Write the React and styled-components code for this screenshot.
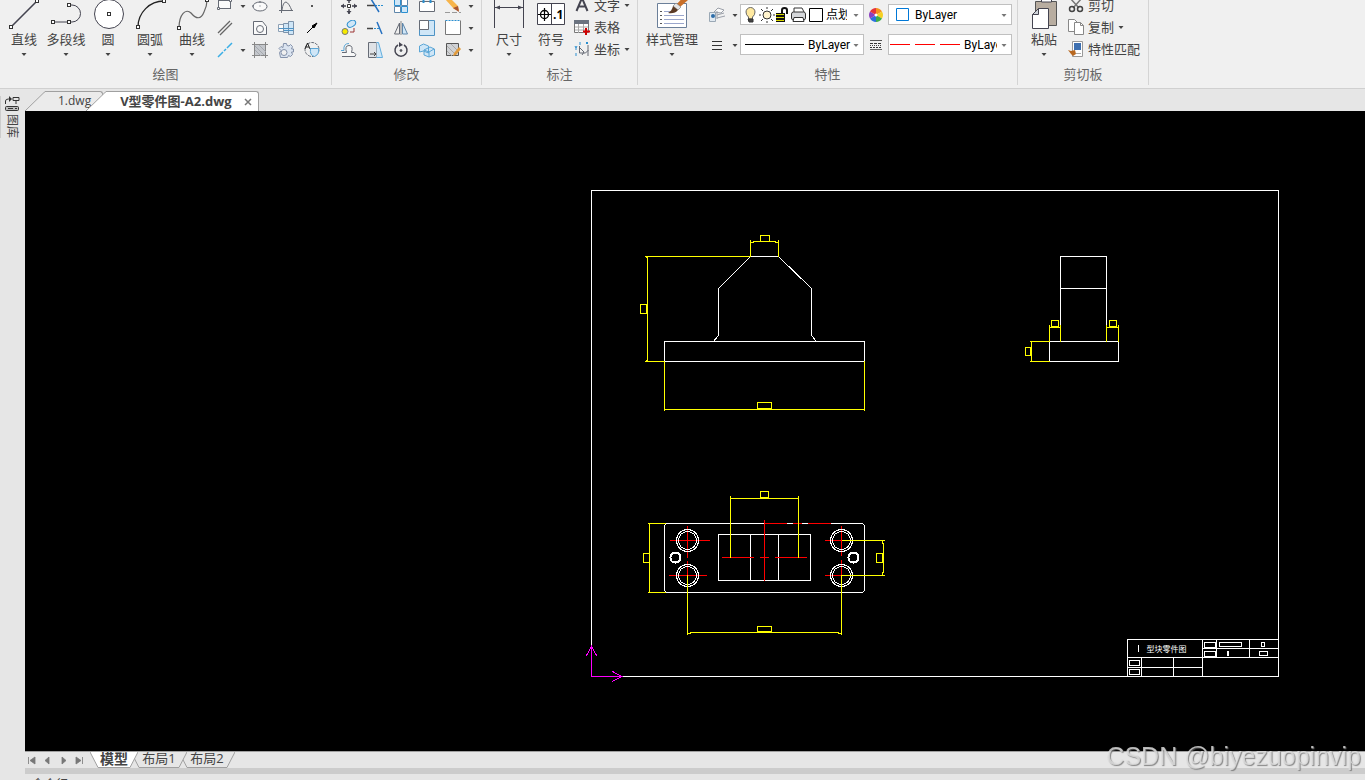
import React from 'react';
import styled, { createGlobalStyle } from 'styled-components';

const GlobalStyle = createGlobalStyle`
  html,
  body {
    margin: 0;
    background: #e6e6e6;
  }
  *,
  *::before,
  *::after {
    box-sizing: border-box;
  }
  button,
  select {
    margin: 0;
    padding: 0;
    border: 0;
    background: none;
    color: inherit;
    font: inherit;
  }
`;

const Page = styled.div`
  height: 100vh;
  display: flex;
  flex-direction: column;
  overflow: hidden;
  font-family: 'Open Sans', 'Noto Sans CJK SC', sans-serif;
  font-size: 13px;
  color: #444444;
`;

/* ---------- ribbon ---------- */

const Ribbon = styled.header`
  flex: none;
  display: flex;
  height: 89px;
  overflow: hidden;
  background: #f0f0f0;
  border-bottom: 1px solid #d0d0d0;
`;

const Group = styled.section`
  flex: none;
  display: flex;
  flex-direction: column;
  height: 85px;
  border-right: 1px solid #d4d4d4;
`;

const Tools = styled.div`
  display: flex;
  height: 66px;
  margin-top: -5px;
  padding: 0 ${p => p.$right}px 0 ${p => p.$left}px;
`;

const GroupTitle = styled.h2`
  margin: 3px 0 0;
  line-height: 20px;
  font-size: 13px;
  font-weight: 400;
  text-align: center;
  color: #666666;
`;

const BigTool = styled.button`
  display: flex;
  flex-direction: column;
  align-items: center;
  width: ${p => p.$width || 42}px;
  line-height: 18px;
  white-space: nowrap;
  svg {
    flex: none;
  }
  svg:last-child {
    margin-top: 2px;
  }
`;

const IconGrid = styled.div`
  display: grid;
  grid-template-columns: ${p => p.$columns};
  grid-auto-rows: 22px;
`;

const IconButton = styled.button`
  display: flex;
  align-items: center;
  justify-content: center;
`;

const ToolList = styled.div`
  display: flex;
  flex-direction: column;
  margin: -1px 0 0 ${p => p.$left}px;
`;

const TextTool = styled.button`
  display: flex;
  align-items: center;
  gap: 4px;
  height: 22px;
  line-height: 16px;
  white-space: nowrap;
`;

const Properties = styled.div`
  display: grid;
  grid-template-columns: 26px 10px 124px 24px 124px;
  grid-auto-rows: 21px;
  row-gap: 9px;
  margin-top: 9px;
`;

const Combo = styled.label`
  display: flex;
  align-items: center;
  min-width: 0;
  padding: 0 4px 0 ${p => p.$left}px;
  border: 1px solid #c0c0c0;
  background: #ffffff;
  color: #000000;
  font-family: Roboto, 'Noto Sans CJK SC', sans-serif;
  font-size: 12px;
  svg {
    flex: none;
  }
`;

const ComboSelect = styled.select`
  flex: 1;
  min-width: 0;
  height: 19px;
  margin: 0 ${p => p.$cut}px 0 ${p => p.$gap}px;
  appearance: none;
  outline: none;
`;

/* ---------- workspace ---------- */

const Workspace = styled.div`
  flex: 1;
  display: flex;
  min-height: 0;
`;

const Sidebar = styled.aside`
  flex: none;
  width: 25px;
  padding-top: 7px;
`;

const SideTab = styled.button`
  display: flex;
  flex-direction: column;
  align-items: center;
  gap: 2px;
  width: 22px;
  height: 42px;
  border-left: 1px solid #cccccc;
`;

const SideLabel = styled.span`
  writing-mode: vertical-rl;
  text-orientation: sideways;
  font-size: 12px;
  line-height: 12px;
`;

const Main = styled.main`
  flex: 1;
  display: flex;
  flex-direction: column;
  min-width: 0;
`;

const DocTabs = styled.nav`
  flex: none;
  display: flex;
  align-items: flex-end;
  height: 22px;
`;

const DocTab = styled.div`
  display: flex;
  height: 20px;
  margin-left: ${p => p.$overlap || 0}px;
`;

const DocBody = styled.div`
  display: flex;
  align-items: center;
  height: 20px;
  padding: 0 ${p => p.$right}px 0 ${p => p.$left}px;
  border: solid #a0a0a0;
  border-width: 1px 1px 0 0;
  border-radius: 0 3px 0 0;
  background: ${p => (p.$active ? '#ffffff' : '#ebebeb')};
  font-size: ${p => (p.$active ? 13 : 12)}px;
  font-weight: ${p => (p.$active ? 700 : 400)};
  line-height: 16px;
  white-space: nowrap;
`;

const DocName = styled.button`
  padding-bottom: 1px;
`;

const CloseButton = styled.button`
  display: flex;
  margin-left: 12px;
`;

const Canvas = styled.div`
  flex: 1;
  min-height: 0;
  overflow: hidden;
  background: #000000;
  svg {
    display: block;
    width: 100%;
    height: 100%;
  }
`;

const LayoutBar = styled.nav`
  flex: none;
  display: flex;
  height: 17px;
  border-top: 1px solid #a0a0a0;
`;

const PageButtons = styled.div`
  display: flex;
  gap: 7px;
  width: 65px;
  padding-left: 2px;
`;

const LayoutTab = styled.button`
  position: relative;
  z-index: ${p => p.$level};
  display: flex;
  height: 16px;
  margin-left: ${p => p.$overlap || 0}px;
`;

const LayoutName = styled.span`
  width: ${p => p.$width}px;
  height: 16px;
  line-height: 13px;
  border-bottom: 1px solid #a0a0a0;
  background: ${p => (p.$active ? '#ffffff' : '#e6e6e6')};
  font-size: ${p => (p.$active ? 14 : 13)}px;
  font-weight: ${p => (p.$active ? 700 : 400)};
  display: flex;
  justify-content: center;
  white-space: nowrap;
`;

const Splitter = styled.div`
  flex: none;
  height: 6px;
  background: #cccccc;
`;

const CommandLine = styled.footer`
  flex: none;
  height: 6px;
  padding: 2px 0 0 7px;
  overflow: hidden;
  font-size: 12px;
  line-height: 18px;
`;

const Watermark = styled.div`
  position: fixed;
  right: 4px;
  bottom: 9px;
  font-family: 'Liberation Sans', sans-serif;
  font-size: 25px;
  line-height: 30px;
  color: rgba(225, 225, 225, 0.8);
  text-shadow: 1px 1px 1px rgba(110, 110, 110, 0.8);
  pointer-events: none;
`;

/* ---------- icons ---------- */

const dark = '#444450';
const blue = '#2a8fd0';
const pale = '#cfe6f7';

const Caret = ({ color = '#444444' }) => (
  <svg width="6" height="8" viewBox="0 0 6 8">
    <path d="M0.5 3h5L3 6z" fill={color} />
  </svg>
);

const Handle = ({ x, y }) => (
  <rect x={x - 1.5} y={y - 1.5} width="3" height="3" fill="#fff" stroke="#333" />
);

const Big = ({ children, width = 42 }) => (
  <svg width={width} height="35" viewBox={`0 -5 ${width} 35`} fill="none" stroke={dark}>
    {children}
  </svg>
);

const Small = ({ children }) => (
  <svg width="16" height="16" viewBox="0 0 16 16" fill="none" stroke="#666b75">
    {children}
  </svg>
);

const LineIcon = () => (
  <Big>
    <path d="M8 27L34 1" strokeWidth="1.6" />
    <Handle x={8} y={27} />
    <Handle x={34} y={1} />
  </Big>
);

const PolylineIcon = () => (
  <Big>
    <path d="M24 5h3a8.5 8.5 0 0 1 0 17H8" />
    <Handle x={8} y={22} />
    <Handle x={24} y={22} />
    <Handle x={24} y={5} />
  </Big>
);

const CircleIcon = () => (
  <Big>
    <circle cx="22" cy="14" r="14.5" fill="#fff" />
    <Handle x={22} y={14} />
  </Big>
);

const ArcIcon = () => (
  <Big>
    <path d="M9 27A26 26 0 0 1 35 1" stroke="#222" strokeWidth="1.3" />
    <Handle x={9} y={27} />
    <Handle x={35} y={1} />
  </Big>
);

const CurveIcon = () => (
  <Big>
    <path d="M8 28C8 14 15 8 20 13C25 19 30 20 33 12Q36 6 36 0" stroke="#666" strokeWidth="1.2" />
    <Handle x={8} y={28} />
    <Handle x={36} y={0} />
  </Big>
);

const DimensionIcon = () => (
  <Big>
    <path d="M6.5-5V28M35.5-5V28M7 7.5H35" />
    <path d="M7 7.5l5-2v4zM35 7.5l-5-2v4z" fill={dark} stroke="none" />
  </Big>
);

const SymbolIcon = () => (
  <Big>
    <path d="M7.5 3.5h27v21h-27zM21.5 3.5v21" fill="#fff" />
    <circle cx="14.5" cy="14.5" r="4" stroke="#000" strokeWidth="1.3" />
    <path d="M8 14.5h13M14.5 8v13" stroke="#000" strokeWidth="1.2" />
    <text x="23" y="19" fontSize="12" fontWeight="700" fill="#000" stroke="none">
      .1
    </text>
  </Big>
);

const StyleIcon = () => (
  <Big width={64}>
    <path d="M17.5 3.5h29v24h-29z" fill="#fff" stroke="#6b7f99" />
    <path d="M24 11.5h7M24 15.5h20M24 19.5h20M24 23.5h20" stroke="#9aa6cc" />
    <path d="M20 11.5h2M20 15.5h2M20 19.5h2M20 23.5h2" stroke="#555" />
    <path d="M37 4L45-5h4l-1 5-8 7z" fill="#c9702a" stroke="none" />
    <path d="M36 3l5 4-3 3-5-4z" fill="#e4e4e4" stroke="#777" strokeWidth="0.6" />
    <path d="M28 13q4-2 5-7l5 4q-3 4-10 3z" fill="#5a3a24" stroke="none" />
  </Big>
);

const PasteIcon = () => (
  <Big>
    <path d="M12.5 1.5h21v24h-21z" fill="#b8ada0" stroke="#555" />
    <path d="M18.5-3v5h10v-5" fill="#fff" />
    <path d="M15.5 8.5h10v20h-16v-14z" fill="#fff" />
    <path d="M15.5 8.5v6h-6z" fill="#d0d4da" />
  </Big>
);

// icons are listed in the order they fill the grid, null stands for an empty cell
const drawIcons = [
  ['矩形', <><rect x="1.5" y="2.5" width="12" height="8" fill="#fafafa" /><path d="M.5 9.5h2v2h-2zM12.5 1.5h2v2h-2z" fill="#fff" /></>],
  ['caret'],
  ['椭圆', <><ellipse cx="8" cy="8.5" rx="7" ry="4.5" fill="#fafafa" /><path d="M7.5 8h1M7 4h2M0 8h2" /></>],
  ['函数曲线', <path d="M3.5 1v14M1 12.5h14M4 12Q5 4 8 4Q11 5 14 13" />],
  ['点', <rect x="7" y="7" width="2" height="2" fill="#555" stroke="none" />],
  ['双线', <path d="M1 13L13 1M3 15L15 3" stroke="#666" strokeWidth="1.3" />],
  null,
  ['孔', <><path d="M1.5 1.5h9l4 5v8h-13z" fill="#fafafa" /><circle cx="8" cy="9" r="3.5" /></>],
  ['轴', <><path d="M.5 4.5h5v7h-5z" fill="#fafafa" stroke="#8da0b5" /><path d="M5.5 3.5h5v9h-5zM10.5 1.5h5v13h-5z" fill={pale} stroke="#7d93ab" /><path d="M1 8.5h15M6 10.5h9" stroke="#4f93c4" /></>],
  ['箭头', <><path d="M3 13l6-6" stroke="#000" /><path d="M13 3l-5 3 2 2z" fill="#000" stroke="#000" /></>],
  ['中心线', <path d="M1 15l5-5M7 9l2-2M10 6l5-5" stroke="#3aaee6" strokeWidth="1.5" />],
  ['caret'],
  ['填充', <><path d="M2.5 2.5h11v11h-11z" fill="#c4c7cc" /><path d="M0 2.5h16M0 13.5h16M2.5 0v16M13.5 0v16" stroke="#888" /><path d="M3 8l6 6M3 4l9 9M7 3l7 7" stroke="#a4a8ae" /></>],
  ['齿轮', <><path d="M5.5 1.5h3l.5 2 2 .5 1.5-1.5 2 2L13.5 7h2v3h-2l1 2.5-2 2-2-1-1 2h-7l-1-5 1.5-2-2-2 2-2 2 1z" fill="#dbe4f0" stroke="#8492ab" /><circle cx="6" cy="10.5" r="3" fill="#f0f0f0" stroke="#8492ab" /></>],
  ['局部放大', <><circle cx="8" cy="7.5" r="7" strokeDasharray="3 1" /><path d="M6.5 6.5h8q1 6-4 8q-5-1-4-8z" fill={pale} stroke="#5ba6d6" /><path d="M1 7l2.5-6L6 7M2 5h3" stroke="#222" /></>],
];

const modifyIcons = [
  ['移动', <><path d="M8 0v5M8 11v5M0 8h5M11 8h5" stroke={dark} strokeWidth="1.5" /><path d="M6.5 6.5h3v3h-3z" fill="#fff" stroke="#333" /><path d="M8 0L5.5 3h5zM8 16l-2.5-3h5zM0 8l3-2.5v5zM16 8l-3-2.5v5z" fill={dark} stroke="none" /></>],
  ['裁剪', <><path d="M0 7.5h8" stroke="#444" strokeWidth="1.5" /><path d="M8 7.5h8" stroke={blue} strokeDasharray="2 1" /><path d="M4 1l8 13" stroke="#2470c0" strokeWidth="1.5" /></>],
  ['阵列', <><path d="M1.5 1.5h6v6h-6zM8.5 8.5h6v6h-6z" fill={pale} stroke={blue} /><path d="M8.5 1.5h6v6h-6zM1.5 8.5h6v6h-6z" fill="#fff" stroke="#5e86aa" /></>],
  ['打断', <><path d="M.5 3.5h15v10H.5z" fill="#fff" /><path d="M4.5 0v5M11.5 0v5" stroke={blue} strokeWidth="2" /></>],
  ['删除', <><path d="M0 1l9 10 5 2-1-5L4-1z" fill="#f7b44a" stroke="none" /><path d="M8 10l6 4-1-6z" fill="#a85432" stroke="none" /><path d="M0 14.5h16" stroke="#999" strokeDasharray="5 2" /></>],
  ['caret'],
  ['复制', <><ellipse cx="10.5" cy="4" rx="4.5" ry="3" fill={pale} stroke={blue} transform="rotate(-30 10 4)" /><circle cx="4" cy="11.5" r="3" fill="#f5ea00" stroke="#777" /><path d="M9 12h4V8" stroke="#9b3333" /></>],
  ['延伸', <><path d="M0 8.5h6" stroke="#444" strokeWidth="1.5" /><path d="M7 8.5h6" stroke={blue} strokeDasharray="2 1" /><path d="M10 2l5 12" stroke="#2470c0" strokeWidth="1.5" /></>],
  ['镜像', <><path d="M6.5 3v11h-5z" fill="#eee" /><path d="M9.5 3v11h5z" fill={pale} stroke="#5e86aa" /><path d="M8 1v14" stroke="#888" /></>],
  ['缩放', <><path d="M.5.5h15v15H.5z" fill={pale} stroke="#4f93c4" /><path d="M.5.5h9v9h-9z" fill="#fff" /></>],
  ['拉伸', <><path d="M.5.5v14h15V.5" fill="#fff" stroke="#777" /><path d="M.5.5h15" stroke={blue} strokeDasharray="2 1" /></>],
  ['caret'],
  ['偏移', <><path d="M1 14.5h13q2-2-1-4h-2.5q2-7-2.5-7t-2.5 7H1" fill="#f8f8f8" /><path d="M0 8.5h3q-1-7 5-7" stroke="#5ba6d6" /></>],
  ['斜切', <><path d="M1.5.5h8v15h-8z" fill="#dfe2e6" /><path d="M9.5.5h2l4 15h-6" fill={pale} stroke="#62aede" /><path d="M3 12h6M7 10l2 2-2 2" stroke="#444" /></>],
  ['旋转', <><path d="M5 3A6 6 0 1 0 11 3" stroke={dark} strokeWidth="1.5" /><path d="M6 0v5l4-2z" fill={dark} stroke="none" /><circle cx="8" cy="8.5" r="1" fill="#333" /></>],
  ['三维', <><path d="M.5 4l4-2 5 2v7l-5-2-4 1zM5 8l6-3 4.5 2v6L10 15l-5-2z" fill={pale} stroke="#5ba6d6" /><path d="M5 8l5 2v5M10 10l5-3" stroke="#5ba6d6" /></>],
  ['编辑填充', <><path d="M1.5 1.5h12v12h-12z" fill="#d0d2d5" stroke="#555" /><path d="M2 9l5 5M2 4l9 9M6 2l8 8" stroke="#a8a8a8" /><path d="M9 11l5-6 2 2-5 6-3 1z" fill="#e09a3c" stroke="none" /></>],
  ['caret'],
];

const TextIcon = () => (
  <Small>
    <path d="M2.5 14L8 1l5.5 13M5 9.5h6" strokeWidth="2" stroke={dark} />
  </Small>
);

const TableIcon = () => (
  <Small>
    <path d="M.5 1.5h14v12H.5z" fill="#fff" stroke="#777" />
    <path d="M0 1h15v4H0z" fill="#6b7380" stroke="none" />
    <path d="M1 8h13M1 11h13M4.5 5v9M9.5 5v9" stroke="#aaa" />
    <path d="M12 9v7M9 12.5h7" stroke="#d00000" strokeWidth="2" />
  </Small>
);

const OrdinateIcon = () => (
  <Small>
    <path d="M5.5 5v7h6l3-3M5 6l5 5M14 4v11M8 14l2-3" />
    <path d="M6 1v3M12 1l2 2M14 1l-2 2M1 5l1 2 1-2M2 7v2M2 12v3" stroke={blue} />
  </Small>
);

const CutIcon = () => (
  <Small>
    <path d="M2 1l9 10M14 1L5 11" stroke="#777" strokeWidth="1.5" />
    <circle cx="4" cy="12" r="2.5" strokeWidth="1.5" stroke="#444" />
    <circle cx="12" cy="12" r="2.5" strokeWidth="1.5" stroke="#444" />
  </Small>
);

const CopyIcon = () => (
  <Small>
    <path d="M.5.5h6l3 3v9h-9z" fill="#fff" stroke="#888" />
    <path d="M6.5 3.5h6l3 3v9h-9z" fill="#fff" stroke="#888" />
    <path d="M12.5 3.5v3h3" stroke="#888" />
  </Small>
);

const MatchIcon = () => (
  <Small>
    <path d="M4.5.5h10v15h-10z" fill="#fff" stroke="#999" />
    <path d="M6 2h7v7H6z" fill="#3d6fb0" stroke="none" />
    <path d="M8 12.5h5" stroke="#aaa" />
    <path d="M0 9l3 1 4-1 1 4-3 2-2-2z" fill="#b86820" stroke="none" />
  </Small>
);

const LayerIcon = () => (
  <Small>
    <path d="M5 5l4-4 6 2-3 3zM8 8l7-2M8 11l8-2" fill="#fafafa" stroke="#9a9fa8" />
    <path d="M.5 5.5h6v9h-6z" fill="#e2eaf1" stroke="#9aa8b5" />
    <circle cx="4" cy="9" r="2" fill="#2d6da8" stroke="none" />
    <path d="M8 4v8" stroke="#9a9fa8" />
  </Small>
);

const ThicknessIcon = () => (
  <Small>
    <path d="M3 4.5h10M3 8.5h10M3 12.5h10" stroke="#333" />
  </Small>
);

const WheelIcon = () => (
  <Small>
    <g stroke="none">
      <path d="M8 8V1A7 7 0 0 1 14 4.5z" fill="#f6921e" />
      <path d="M8 8l6-3.5a7 7 0 0 1 0 7z" fill="#f5d020" />
      <path d="M8 8l6 3.5A7 7 0 0 1 8 15z" fill="#3fae49" />
      <path d="M8 8v7a7 7 0 0 1-6-3.5z" fill="#2b6fe0" />
      <path d="M8 8l-6 3.5a7 7 0 0 1 0-7z" fill="#8a3fc0" />
      <path d="M8 8L2 4.5A7 7 0 0 1 8 1z" fill="#e5353b" />
      <circle cx="8" cy="8" r="1.5" fill="#fff" />
    </g>
  </Small>
);

const LineTypeIcon = () => (
  <Small>
    <path d="M2 3.5h12" stroke="#555" />
    <path d="M2 6.5h12" stroke="#333" strokeDasharray="3 1" />
    <path d="M2 8.5h12" stroke="#444" strokeDasharray="1 1" />
    <path d="M2 10.5h12" stroke="#333" strokeDasharray="2 1" />
    <path d="M2 12.5h12" stroke="#666" />
  </Small>
);

const LayerStates = () => (
  <svg width="81" height="18" viewBox="0 0 81 18" fill="none" stroke="#333">
    <path d="M5.5 11Q3 9 3 6a4.5 4.5 0 0 1 9 0q0 3-2.5 5v2h-4z" fill="#ffe9a0" stroke="#666" />
    <path d="M5 13h5v3H6z" fill="#444" />
    <circle cx="24" cy="9" r="4" fill="#fff3cd" />
    <path d="M24 1v2M24 15v2M16 9h2M30 9h2M18 3l2 2M30 3l-2 2M18 15l2-2M30 15l-2-2" />
    <path d="M33 7h9v9h-9z" fill="#111" stroke="none" />
    <path d="M33 8.5h8M33 11.5h8M33 14.5h8" stroke="#d8d800" />
    <path d="M39 8V4q0-2 2.5-2T44 4v4" stroke="#111" strokeWidth="2" />
    <path d="M51 6V2h8l2 4" fill="#fff" />
    <rect x="48.5" y="6" width="14" height="8" rx="2" fill="#d5d7da" />
    <path d="M51 11.5h9l1 4H50z" fill="#fff" />
    <path d="M66.5 2.5h13v13h-13z" fill="#fff" stroke="#000" />
  </svg>
);

const LibraryIcon = () => (
  <svg width="16" height="16" viewBox="0 0 16 16" fill="none" stroke="#333">
    <path d="M1.5 8V5q0-2 3-2h2M9 1.5h6v3H9zM12 4v4" />
    <path d="M5 0v6l3-3z" fill="#333" stroke="none" />
    <rect x="1.5" y="10.5" width="13" height="4" rx="1" fill="#bbb" />
    <path d="M4 12.5h5M11 12.5h2" />
  </svg>
);

/* ---------- drawing sheet ---------- */

const titleBoxes = [
  [1204, 642, 11, 5],
  [1219, 642, 22, 4],
  [1261, 642, 3, 4],
  [1204, 651, 11, 5],
  [1227, 651, 1, 4],
  [1259, 651, 8, 4],
  [1129, 660, 10, 5],
  [1129, 669, 10, 5],
];

const holes = [
  [687, 540],
  [841, 540],
  [687, 575],
  [841, 575],
];

const Drawing = () => (
  <svg shapeRendering="crispEdges" role="img" aria-label="V型零件图">
    <g transform="translate(-24.5 -110.5)" fill="none" stroke="#fff" strokeLinecap="square">
      <path d="M591 190H1278V676H591z" />

      <path d="M750 256H778L811 288V335L816 341M750 256L718 288V335L713 341" />
      <path d="M664 341H864V361H664z" />
      <path d="M1060 256H1106V341H1060zM1060 288H1106M1049 341H1118V361H1049z" />

      <path d="M666 523H862L864 525V590L862 592H666L664 590V525z" />
      <path d="M718 534H810V580H718zM750 534V580M778 534V580" />
      <path d="M670 540H709M687 526V557M669 575H706M687 561V576M825 540H841M841 526V555M825 575H841M841 560V576" stroke="#f00" />
      <path d="M722 557H753M760 557H768M775 557H806M764 520V580M764 523H786M793 523H801M808 523H830" stroke="#f00" />
      {holes.map(([x, y]) => (
        <g key={`${x}-${y}`}>
          <circle cx={x} cy={y} r="11" />
          <circle cx={x} cy={y} r="9" />
        </g>
      ))}
      <circle cx="675" cy="557" r="5" strokeWidth="2" />
      <circle cx="853" cy="557" r="5" strokeWidth="2" />

      <g stroke="#ff0">
        <path d="M750 240V256M778 240V256M750 242H753V241H775V242H778M760 235H769V241H760z" />
        <path d="M645 256H750M645 361H664M646 257H647V360H646M640 304H646V313H640z" />
        <path d="M664 361V410M864 361V410M664 409H864M757 402H771V408H757z" />
        <path d="M1049 325V341M1060 325V341M1049 327H1060M1051 320H1058V326H1051z" />
        <path d="M1106 325V341M1118 325V341M1106 327H1118M1109 320H1116V326H1109z" />
        <path d="M1030 341H1049M1030 361H1049M1031 341V361M1025 347H1030V355H1025z" />
        <path d="M730 496V557M798 496V557M730 498H798M760 491H768V497H760z" />
        <path d="M648 523H665M648 592H665M649 523V592M643 553H649V562H643z" />
        <path d="M842 540H884M841 575H884M882 541V543H883V572H882V574M876 553H882V562H876z" />
        <path d="M687 575V634M841 575V634M687 633H690V632H838V633H841M757 626H771V631H757z" />
      </g>

      <path d="M1127 676V639H1278M1127 657H1278M1202 648H1278M1127 667H1202M1202 639V676M1141 657V676M1173 657V676M1216 639V657M1249 639V657" />
      {titleBoxes.map(([x, y, w, h]) => (
        <path key={`${x}-${y}`} d={`M${x} ${y}h${w}v${h}h${-w}z`} />
      ))}
      <path d="M1138 645V651" />
      <text x="1146" y="651" fontSize="8" fill="#fff" stroke="none">
        型块零件图
      </text>

      <path d="M591 646V676H621M586 655L591 646L596 655M612 671L621 676L612 681" stroke="#f0f" />
    </g>
  </svg>
);

/* ---------- parts ---------- */

const Tool = ({ icon, label, width }) => (
  <BigTool type="button" $width={width}>
    {icon}
    {label}
    <Caret />
  </BigTool>
);

const Icons = ({ items, columns }) => (
  <IconGrid $columns={columns}>
    {items.map((item, i) => {
      if (!item) return <span key={i} />;
      const [name, drawing] = item;
      return (
        <IconButton key={i} type="button" aria-label={drawing ? name : '更多'}>
          {drawing ? <Small>{drawing}</Small> : <Caret />}
        </IconButton>
      );
    })}
  </IconGrid>
);

const RowTool = ({ icon, label, menu }) => (
  <TextTool type="button">
    {icon}
    {label}
    {menu && <Caret />}
  </TextTool>
);

const ComboBox = ({ name, value, left, gap, cut = 6, children }) => (
  <Combo $left={left}>
    {children}
    <ComboSelect aria-label={name} $gap={gap} $cut={cut} defaultValue={value}>
      <option>{value}</option>
    </ComboSelect>
    <Caret color="#777777" />
  </Combo>
);

const LayoutSheet = ({ name, width, overlap, level, active }) => {
  const fill = active ? '#ffffff' : '#e6e6e6';
  return (
    <LayoutTab type="button" $overlap={overlap} $level={level}>
      <svg width="8" height="16">
        <path d="M0 0L8 15.5V0z" fill={fill} />
        <path d="M0 0L8 15.5" stroke="#a0a0a0" />
      </svg>
      <LayoutName $width={width} $active={active}>
        {name}
      </LayoutName>
      <svg width="8" height="16">
        <path d="M8 0L0 15.5V0z" fill={fill} />
        <path d="M8 0L0 15.5" stroke="#a0a0a0" />
      </svg>
    </LayoutTab>
  );
};

const DocSlope = ({ fill }) => (
  <svg width="20" height="20">
    <path d="M0 20L20 .5V20z" fill={fill} />
    <path d="M0 20L19 1.5Q20 .5 21 .5" fill="none" stroke="#a0a0a0" />
  </svg>
);

const pageArrows = [
  ['首页', 'M1.5 1v7M8 1v7L3 4.5z'],
  ['上一页', 'M6 1v7L2 4.5z'],
  ['下一页', 'M3 1v7l4-3.5z'],
  ['末页', 'M1 1v7l5-3.5zM7.5 1v7'],
];

const App = () => {
  return (
    <Page>
      <GlobalStyle />
      <Ribbon>
        <Group>
          <Tools $left={3} $right={6}>
            <Tool icon={<LineIcon />} label="直线" />
            <Tool icon={<PolylineIcon />} label="多段线" />
            <Tool icon={<CircleIcon />} label="圆" />
            <Tool icon={<ArcIcon />} label="圆弧" />
            <Tool icon={<CurveIcon />} label="曲线" />
            <Icons items={drawIcons} columns="24px 11px 24px 27px 26px" />
          </Tools>
          <GroupTitle>绘图</GroupTitle>
        </Group>
        <Group>
          <Tools $left={4} $right={6}>
            <Icons items={modifyIcons} columns="repeat(5, 26px) 9px" />
          </Tools>
          <GroupTitle>修改</GroupTitle>
        </Group>
        <Group>
          <Tools $left={6} $right={7}>
            <Tool icon={<DimensionIcon />} label="尺寸" />
            <Tool icon={<SymbolIcon />} label="符号" />
            <ToolList $left={2}>
              <RowTool icon={<TextIcon />} label="文字" menu />
              <RowTool icon={<TableIcon />} label="表格" />
              <RowTool icon={<OrdinateIcon />} label="坐标" menu />
            </ToolList>
          </Tools>
          <GroupTitle>标注</GroupTitle>
        </Group>
        <Group>
          <Tools $left={2} $right={5}>
            <Tool icon={<StyleIcon />} label="样式管理" width={64} />
            <Properties>
              <IconButton type="button" aria-label="图层">
                <LayerIcon />
              </IconButton>
              <IconButton type="button" aria-label="更多图层">
                <Caret />
              </IconButton>
              <ComboBox name="图层" value="点划线" left={2} gap={2}>
                <LayerStates />
              </ComboBox>
              <IconButton type="button" aria-label="颜色">
                <WheelIcon />
              </IconButton>
              <ComboBox name="颜色" value="ByLayer" left={7} gap={6}>
                <svg width="13" height="13">
                  <path d="M.5.5h12v12H.5z" fill="#fff" stroke="#0078d7" />
                </svg>
              </ComboBox>
              <IconButton type="button" aria-label="线宽">
                <ThicknessIcon />
              </IconButton>
              <IconButton type="button" aria-label="更多线宽">
                <Caret />
              </IconButton>
              <ComboBox name="线宽" value="ByLayer" left={4} gap={4} cut={0}>
                <svg width="59" height="1">
                  <path d="M0 .5h59" stroke="#000" />
                </svg>
              </ComboBox>
              <IconButton type="button" aria-label="线型">
                <LineTypeIcon />
              </IconButton>
              <ComboBox name="线型" value="ByLayer" left={1} gap={4} cut={4}>
                <svg width="70" height="1">
                  <path d="M0 .5h20M25 .5h20M50 .5h20" stroke="#ff0000" />
                </svg>
              </ComboBox>
            </Properties>
          </Tools>
          <GroupTitle>特性</GroupTitle>
        </Group>
        <Group>
          <Tools $left={5} $right={8}>
            <Tool icon={<PasteIcon />} label="粘贴" />
            <ToolList $left={3}>
              <RowTool icon={<CutIcon />} label="剪切" />
              <RowTool icon={<CopyIcon />} label="复制" menu />
              <RowTool icon={<MatchIcon />} label="特性匹配" />
            </ToolList>
          </Tools>
          <GroupTitle>剪切板</GroupTitle>
        </Group>
      </Ribbon>

      <Workspace>
        <Sidebar>
          <SideTab type="button">
            <LibraryIcon />
            <SideLabel>图库</SideLabel>
          </SideTab>
        </Sidebar>
        <Main>
          <DocTabs>
            <DocTab>
              <DocSlope fill="#ebebeb" />
              <DocBody $left={13} $right={11}>
                <DocName type="button">1.dwg</DocName>
              </DocBody>
            </DocTab>
            <DocTab $overlap={-17}>
              <DocSlope fill="#ffffff" />
              <DocBody $left={14} $right={6} $active>
                <DocName type="button">V型零件图-A2.dwg</DocName>
                <CloseButton type="button" aria-label="关闭">
                  <svg width="8" height="8">
                    <path d="M1 1l6 6M7 1L1 7" stroke="#777" strokeWidth="1.5" />
                  </svg>
                </CloseButton>
              </DocBody>
            </DocTab>
          </DocTabs>
          <Canvas>
            <Drawing />
          </Canvas>
          <LayoutBar>
            <PageButtons>
              {pageArrows.map(([name, d]) => (
                <IconButton key={name} type="button" aria-label={name}>
                  <svg width="9" height="9" fill="#777">
                    <path d={d} stroke="#777" strokeWidth="0.8" />
                  </svg>
                </IconButton>
              ))}
            </PageButtons>
            <LayoutSheet name="模型" width={32} level={3} active />
            <LayoutSheet name="布局1" width={40} overlap={-7} level={2} />
            <LayoutSheet name="布局2" width={40} overlap={-8} level={1} />
          </LayoutBar>
          <Splitter />
          <CommandLine>命令行</CommandLine>
        </Main>
      </Workspace>
      <Watermark>CSDN @biyezuopinvip</Watermark>
    </Page>
  );
};

export default App;
